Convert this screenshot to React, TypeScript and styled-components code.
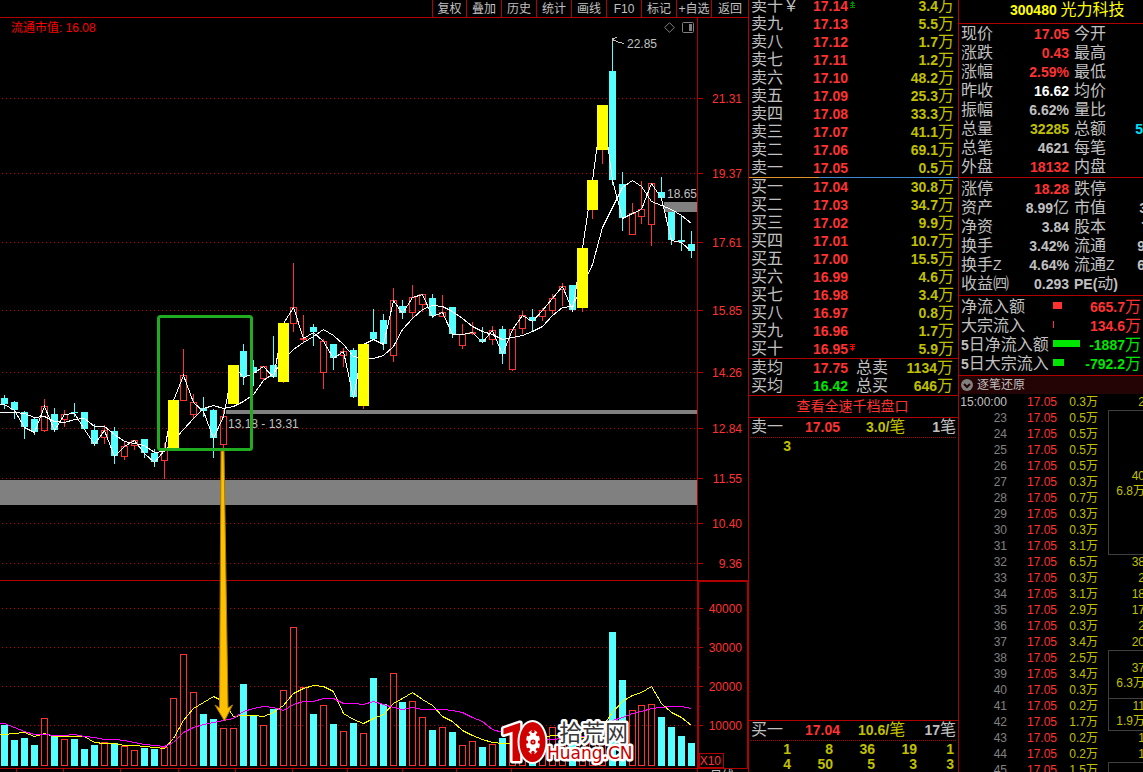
import React from "react";
import styled, { createGlobalStyle } from "styled-components";

const LINE = "#b00000";
const RED = "#ff3232";
const CYAN = "#54ffff";
const GOLD = "#c0c000";
const GRAY = "#c0c0c0";
const GREEN = "#00e600";

const GlobalStyle = createGlobalStyle`
  * { box-sizing: border-box; }
  body {
    margin: 0;
    background: #000;
    color: ${GRAY};
    font-family: "Liberation Sans", "Noto Sans CJK SC", sans-serif;
    font-size: 12px;
  }
`;

const Screen = styled.div`
  display: flex;
  height: 100vh;
  overflow: hidden;
  background: #000;
`;

/* ---------- chart column ---------- */

const ChartColumn = styled.main`
  flex: 1;
  min-width: 0;
  display: flex;
  flex-direction: column;
`;

const Toolbar = styled.nav`
  display: flex;
  justify-content: flex-end;
  flex: none;
  height: 18px;
  border-bottom: 1px solid ${LINE};
`;

const ToolButton = styled.button`
  width: 35px;
  padding: 0;
  border: 0;
  border-left: 1px solid ${LINE};
  background: none;
  color: ${GRAY};
  font: inherit;
  line-height: 14px;
  white-space: nowrap;
  &:first-child { width: 34px; }
  &:last-child { width: 37px; }
`;

const ChartBody = styled.section`
  position: relative;
  flex: 1;
  min-height: 0;
`;

const ChartHeader = styled.header`
  position: absolute;
  inset: 0 54px auto 11px;
  display: flex;
  align-items: center;
  gap: 7px;
  height: 19px;
`;

const MarketValue = styled.span`
  margin-right: auto;
  color: #ff0000;
  line-height: 14px;
`;

const IconButton = styled.button`
  display: flex;
  padding: 0;
  border: 0;
  background: none;
`;

const ChartSvg = styled.svg`
  display: block;
  width: 100%;
  font-family: "Liberation Sans", "Noto Sans CJK SC", sans-serif;
  font-size: 12px;
`;

type Kind = "c" | "r" | "y";
/* kind, body top, body bottom, high, low, volume top */
type Candle = [Kind, number, number, number, number, number];

const candles: Candle[] = [
  ["c", 398, 404, 395, 409, 725],
  ["c", 402, 410, 401, 419, 740],
  ["c", 412, 427, 411, 439, 738],
  ["c", 419, 432, 417, 435, 745],
  ["r", 406, 431, 399, 432, 718],
  ["c", 414, 430, 408, 432, 736],
  ["r", 414, 420, 410, 427, 739],
  ["c", 412, 413, 403, 417, 739],
  ["c", 412, 429, 412, 429, 749],
  ["c", 430, 444, 424, 446, 745],
  ["r", 430, 438, 425, 444, 742],
  ["c", 431, 456, 427, 464, 743],
  ["r", 446, 457, 441, 460, 746],
  ["r", 440, 446, 440, 450, 750],
  ["c", 439, 453, 439, 458, 748],
  ["c", 453, 462, 449, 467, 749],
  ["r", 450, 461, 443, 479, 747],
  ["y", 400, 448, 400, 451, 698],
  ["r", 375, 401, 349, 401, 654],
  ["r", 402, 415, 394, 419, 692],
  ["c", 408, 411, 397, 417, 714],
  ["c", 410, 438, 409, 458, 719],
  ["r", 416, 445, 410, 451, 728],
  ["y", 365, 404, 365, 404, 728],
  ["c", 351, 377, 344, 385, 684],
  ["c", 367, 373, 360, 386, 715],
  ["r", 366, 379, 366, 380, 725],
  ["c", 365, 377, 336, 378, 709],
  ["y", 323, 382, 323, 383, 690],
  ["r", 307, 324, 263, 332, 627],
  ["r", 338, 340, 315, 342, 687],
  ["c", 327, 332, 324, 346, 714],
  ["r", 341, 373, 339, 389, 705],
  ["c", 344, 358, 344, 370, 724],
  ["r", 351, 356, 348, 367, 731],
  ["c", 350, 397, 348, 398, 723],
  ["y", 344, 406, 344, 409, 733],
  ["c", 332, 339, 309, 340, 678],
  ["c", 320, 344, 314, 350, 704],
  ["r", 300, 356, 288, 362, 673],
  ["c", 306, 313, 300, 319, 702],
  ["r", 297, 313, 285, 319, 701],
  ["r", 294, 305, 294, 312, 717],
  ["c", 298, 316, 294, 318, 730],
  ["r", 312, 317, 295, 317, 727],
  ["c", 307, 334, 307, 338, 732],
  ["r", 334, 346, 324, 349, 745],
  ["r", 332, 334, 322, 335, 741],
  ["c", 339, 342, 327, 343, 747],
  ["r", 330, 340, 326, 345, 744],
  ["c", 329, 354, 326, 364, 738],
  ["r", 329, 370, 329, 371, 733],
  ["r", 315, 329, 311, 334, 735],
  ["c", 317, 321, 309, 331, 738],
  ["r", 310, 317, 308, 321, 733],
  ["r", 298, 311, 294, 314, 727],
  ["r", 286, 290, 283, 306, 737],
  ["c", 285, 310, 285, 312, 743],
  ["y", 248, 308, 248, 312, 741],
  ["y", 180, 210, 180, 219, 742],
  ["y", 105, 150, 105, 164, 732],
  ["c", 71, 180, 40, 185, 632],
  ["c", 184, 218, 172, 231, 680],
  ["r", 213, 235, 203, 235, 710],
  ["r", 209, 217, 181, 224, 705],
  ["r", 183, 225, 183, 246, 704],
  ["c", 192, 198, 177, 200, 717],
  ["c", 212, 240, 212, 245, 727],
  ["c", 240, 242, 216, 251, 736],
  ["c", 244, 251, 231, 258, 743],
];

/* the column step is a touch under ten pixels, so a pixel drops out now and then */
const xOf = (i: number) => 10 * i + (i < 17 ? 4 : i < 40 ? 3 : i < 64 ? 2 : 1);

const closes = candles.map(([k, top, bottom]) => (k === "c" ? bottom : top));
const average = [
  412, 412, 413, 417, 416, 421, 422, 419, 418, 426, 426, 434, 441, 443, 445, 452, 451, 440, 429, 418, 408, 405, 408,
  406, 401, 394, 380, 373, 359, 349, 342, 336, 329, 335, 344, 356, 358, 358, 355, 346, 329, 318, 309, 305, 306, 311,
  318, 326, 331, 334, 339, 337, 335, 331, 326, 315, 307, 306, 285, 264, 227, 207, 187, 180, 186, 201, 205, 209, 215,
  223,
];
const volumeFast = [
  734, 733, 732, 736, 733, 736, 736, 736, 736, 742, 743, 743, 745, 745, 746, 747, 748, 738, 720, 708, 702, 696, 701,
  716, 715, 715, 716, 712, 705, 693, 688, 685, 686, 691, 713, 719, 723, 718, 714, 703, 698, 692, 699, 705, 716, 721,
  730, 735, 739, 742, 743, 743, 742, 742, 737, 735, 735, 737, 737, 737, 726, 712, 701, 695, 692, 686, 703, 712, 717,
  725,
];
const volumeSlow = [
  723, 727, 731, 734, 734, 735, 735, 734, 736, 737, 739, 739, 740, 742, 744, 745, 746, 742, 732, 727, 724, 722, 720,
  718, 711, 708, 706, 707, 710, 704, 701, 701, 698, 698, 703, 703, 704, 701, 704, 707, 709, 707, 709, 709, 709, 710,
  712, 717, 721, 729, 732, 735, 738, 739, 739, 739, 738, 737, 736, 734, 727, 720, 717, 713, 711, 708, 707, 706, 706,
  708,
];

const points = (ys: number[]) =>
  `0,${ys[0]} ` + ys.map((y, i) => `${xOf(i) + 0.5},${y + 0.5}`).join(" ");

const priceGrid: [string, number][] = [
  ["21.31", 98], ["19.37", 173], ["17.61", 242], ["15.85", 310], ["14.26", 372],
  ["12.84", 428], ["11.55", 478], ["10.40", 523], ["9.36", 563],
];
const volumeGrid: [string, number][] = [
  ["40000", 608], ["30000", 647], ["20000", 686], ["10000", 725],
];

function CandleMark({ candle, x }: { candle: Candle; x: number }) {
  const [kind, top, bottom, high, low] = candle;
  if (kind === "y") {
    return <rect x={x} y={bottom} width={1} height={low - bottom} fill={RED} />;
  }
  if (kind === "c") {
    return (
      <g fill={CYAN}>
        <rect x={x} y={high} width={1} height={low - high} />
        <rect x={x - 3} y={top} width={7} height={bottom - top} />
      </g>
    );
  }
  return (
    <g>
      <rect x={x} y={high} width={1} height={top - high} fill={RED} />
      <rect x={x} y={bottom} width={1} height={Math.max(0, low - bottom)} fill={RED} />
      <rect x={x - 2.5} y={top + 0.5} width={6} height={bottom - top - 1} fill="none" stroke={RED} />
    </g>
  );
}

function Logo() {
  const spokes = [0, 45, 90, 135, 180, 225, 270, 315];
  return (
    <g>
      <g stroke="#fff" strokeLinejoin="round" fill="#d00000" paintOrder="stroke">
        <text x={499} y={761} fontSize={54} fontWeight={700} fontFamily="Roboto, sans-serif" strokeWidth={5}>1</text>
        <ellipse cx={532.5} cy={742} rx={13} ry={20} strokeWidth={4} />
      </g>
      <ellipse cx={533} cy={742} rx={7} ry={12} fill="#fff" />
      <g fill="#d00000">
        {spokes.map((a) => (
          <circle key={a} cx={533 + 6.5 * Math.cos((a * Math.PI) / 180)} cy={742 + 10.5 * Math.sin((a * Math.PI) / 180)} r={1.7} />
        ))}
        <circle cx={533} cy={742} r={2.6} />
      </g>
      <circle cx={533} cy={742} r={0.8} fill="#fff" />
      <g stroke="#fff" strokeWidth={5} strokeLinejoin="round" paintOrder="stroke">
        <text x={559} y={741} fontSize={23} fontFamily="Noto Sans CJK SC, sans-serif" fill="#383838">拾荒网</text>
        <text x={547} y={759} fontSize={17} fontFamily="DejaVu Sans, sans-serif" fill="#c80000">Huang.CN</text>
      </g>
    </g>
  );
}

function Chart() {
  return (
    <ChartSvg viewBox="0 18 748 754" role="img" aria-label="K线图">
      <g shapeRendering="crispEdges">
        <rect x={0} y={480} width={697} height={25} fill="#808080" />
        <rect x={226} y={410} width={471} height={4} fill="#808080" />
        <rect x={664} y={202} width={33} height={10} fill="#808080" />
        {[...priceGrid, ...volumeGrid].map(([label, y]) => (
          <g key={label} stroke="#c00000">
            <line x1={2} x2={697} y1={y + 0.5} y2={y + 0.5} strokeDasharray="1 3" />
            <line x1={698} x2={703} y1={y + 0.5} y2={y + 0.5} />
          </g>
        ))}
        <g fill={LINE}>
          <rect x={697} y={18} width={1} height={754} />
          <rect x={0} y={580} width={748} height={1} />
          <rect x={0} y={768} width={748} height={1} />
          <rect x={698} y={581} width={50} height={1} />
          <rect x={698} y={581} width={1} height={187} />
          <rect x={747} y={581} width={1} height={187} />
          {[628, 667, 706].map((y) => <rect key={y} x={699} y={y} width={1} height={1} />)}
          {[16, 63, 120, 178, 235, 292, 347, 402, 456, 511].map((x) => (
            <rect key={x} x={x} y={769} width={1} height={3} />
          ))}
        </g>
        <rect x={699.5} y={753.5} width={24} height={14} fill="none" stroke={LINE} />
        {candles.map((c, i) => <CandleMark key={i} candle={c} x={xOf(i)} />)}
        {candles.map((c, i) =>
          c[0] === "c" ? (
            <rect key={i} x={xOf(i) - 3} y={c[5]} width={7} height={766 - c[5]} fill={CYAN} />
          ) : (
            <rect key={i} x={xOf(i) - 2.5} y={c[5] + 0.5} width={6} height={765 - c[5]} fill="none" stroke={RED} />
          ),
        )}
        <g fill="none">
          <polyline points={points(average)} stroke="#fff" />
          <polyline points={points(closes)} stroke="#fff" />
          <polyline points={points(volumeFast)} stroke="#ffff00" />
          <polyline points={points(volumeSlow)} stroke="#ff00ff" />
        </g>
        {candles.map((c, i) =>
          c[0] === "y" ? (
            <rect key={i} x={xOf(i) - 5} y={c[1]} width={11} height={c[2] - c[1]} fill="#ffff00" />
          ) : null,
        )}
        <path d="M612.5 43V38.5L617 37.500M612.500 39.500L618 42L624 43.500" fill="none" stroke={GRAY} />
      </g>
      <g fill={GRAY}>
        <text x={627} y={48}>22.85</text>
        <text x={667} y={198}>18.65</text>
        <text x={228} y={428}>13.18 - 13.31</text>
        <text x={710} y={780}>日线</text>
      </g>
      <g fill={RED} textAnchor="end">
        {[...priceGrid, ...volumeGrid].map(([label, y]) => (
          <text key={label} x={742} y={y + 5}>{label}</text>
        ))}
        <text x={721} y={765}>X10</text>
      </g>
      <rect x={158.5} y={316.5} width={93} height={133} rx={2} fill="none" stroke="#20ac20" strokeWidth={3} />
      <path d="M221 451H224L228 708L232.500 705L224.500 721L215 705L219.500 708Z" fill="#ffc000" stroke="#a87c00" strokeWidth={1} />
      <Logo />
    </ChartSvg>
  );
}

/* ---------- shared pieces of the data panels ---------- */

const Num = styled.span`
  font-size: 14px;
  font-weight: 700;
  line-height: 0;
`;

/* Latin runs are set bold and smaller beside the Chinese characters */
function Mixed({ text }: { text: string }) {
  return (
    <>
      {text.split(/([\x20-\x7e]+)/).map((part, i) => (i % 2 ? <Num key={i}>{part}</Num> : part))}
    </>
  );
}

const DataTable = styled.table<{ $row: number }>`
  width: 100%;
  table-layout: fixed;
  border-collapse: collapse;
  font-size: 16px;
  line-height: ${(p) => p.$row}px;
  white-space: nowrap;
  td, th { padding: 0; height: ${(p) => p.$row}px; }
`;

const Label = styled.th`
  font-weight: 400;
  text-align: left;
  color: ${GRAY};
`;

const Cell = styled.td<{ $color?: string; $end?: boolean }>`
  color: ${(p) => p.$color ?? GRAY};
  text-align: ${(p) => (p.$end ? "right" : "left")};
`;

/* ---------- order book ---------- */

const BookColumn = styled.aside`
  flex: none;
  width: 210px;
  display: flex;
  flex-direction: column;
  overflow: hidden;
  border-left: 1px solid ${LINE};
`;

const BookBlock = styled.section<{ $line?: boolean; $end?: number }>`
  flex: none;
  padding: 0 ${(p) => p.$end ?? 4}px 0 2px;
  border-bottom: ${(p) => (p.$line ? `1px solid ${LINE}` : 0)};
`;

const SellBlock = styled(BookBlock)`
  margin-top: -3px;
`;

const SpreadBar = styled.div`
  flex: none;
  height: 1px;
  background: linear-gradient(90deg, #e0922f 70px, #3f87d0 70px);
`;

const Marker = styled.svg`
  margin-left: 2px;
  vertical-align: 3px;
`;

const DepthLink = styled.a`
  flex: none;
  height: 22px;
  padding: 0 12px 0 10px;
  border-bottom: 1px solid ${LINE};
  color: ${RED};
  font-size: 14px;
  line-height: 20px;
  text-align: center;
  text-decoration: none;
`;

const QueueHead = styled.div`
  flex: none;
  display: grid;
  grid-template-columns: 54px 44px 1fr auto;
  margin: 0 2px;
  height: 20px;
  border-bottom: 1px dotted ${LINE};
  font-size: 16px;
  line-height: 18px;
`;

const Average = styled.span<{ $wide?: boolean }>`
  padding-left: ${(p) => (p.$wide ? 9 : 17)}px;
  color: ${GOLD};
`;

const BookTail = styled.div`
  flex: none;
  height: 52px;
  margin-top: auto;
  border-top: 1px solid ${LINE};
`;

const Tint = styled.span<{ $color: string }>`
  color: ${(p) => p.$color};
`;

const QueueGrid = styled.div`
  display: grid;
  grid-template-columns: repeat(4, 42px) 1fr;
  padding: 1px 4px 0 0;
  color: ${GOLD};
  font-size: 14px;
  font-weight: 700;
  line-height: 15px;
  text-align: right;
`;

const sells = [
  ["卖十￥", "17.14", "3.4万"], ["卖九", "17.13", "5.5万"], ["卖八", "17.12", "1.7万"],
  ["卖七", "17.11", "1.2万"], ["卖六", "17.10", "48.2万"], ["卖五", "17.09", "25.3万"],
  ["卖四", "17.08", "33.3万"], ["卖三", "17.07", "41.1万"], ["卖二", "17.06", "69.1万"],
  ["卖一", "17.05", "0.5万"],
];
const buys = [
  ["买一", "17.04", "30.8万"], ["买二", "17.03", "34.7万"], ["买三", "17.02", "9.9万"],
  ["买四", "17.01", "10.7万"], ["买五", "17.00", "15.5万"], ["买六", "16.99", "4.6万"],
  ["买七", "16.98", "3.4万"], ["买八", "16.97", "0.8万"], ["买九", "16.96", "1.7万"],
  ["买十", "16.95", "5.9万"],
];

function BookTable({ rows }: { rows: string[][] }) {
  return (
    <DataTable $row={18}>
      <colgroup><col style={{ width: 62 }} /><col style={{ width: 60 }} /><col /></colgroup>
      <tbody>
        {rows.map(([name, price, amount]) => (
          <tr key={name}>
            <Label scope="row">{name}</Label>
            <Cell $color={RED}>
              <Mixed text={price} />
              {price === "17.14" && (
                <Marker width={5} height={7} viewBox="0 0 5 7"><path d="M2.500 0L5 3H3V4H5V5H3V6H5V7H0V6H2V5H0V4H2V3H0Z" fill="#008c00" /></Marker>
              )}
              {price === "16.95" && (
                <Marker width={5} height={7} viewBox="0 0 5 7"><path d="M0 0H5V1H3V2H5V3H3V4H5L2.500 7L0 4H2V3H0V2H2V1H0Z" fill="#ff0000" /></Marker>
              )}
            </Cell>
            <Cell $color={GOLD} $end><Mixed text={amount} /></Cell>
          </tr>
        ))}
      </tbody>
    </DataTable>
  );
}

function Book() {
  return (
    <BookColumn>
      <SellBlock><BookTable rows={sells} /></SellBlock>
      <SpreadBar />
      <BookBlock $line><BookTable rows={buys} /></BookBlock>
      <BookBlock $line $end={5}>
        <DataTable $row={18}>
          <colgroup><col style={{ width: 62 }} /><col style={{ width: 43 }} /><col style={{ width: 34 }} /><col /></colgroup>
          <tbody>
            <tr>
              <Label scope="row">卖均</Label>
              <Cell $color={RED}><Mixed text="17.75" /></Cell>
              <Label scope="row">总卖</Label>
              <Cell $color={GOLD} $end><Mixed text="1134万" /></Cell>
            </tr>
            <tr>
              <Label scope="row">买均</Label>
              <Cell $color={GREEN}><Mixed text="16.42" /></Cell>
              <Label scope="row">总买</Label>
              <Cell $color={GOLD} $end><Mixed text="646万" /></Cell>
            </tr>
          </tbody>
        </DataTable>
      </BookBlock>
      <DepthLink href="#depth">查看全速千档盘口</DepthLink>
      <QueueHead>
        <span>卖一</span>
        <Tint $color={RED}><Mixed text="17.05" /></Tint>
        <Average><Mixed text="3.0/笔" /></Average>
        <span><Mixed text="1笔" /></span>
      </QueueHead>
      <QueueGrid><span>3</span></QueueGrid>
      <BookTail>
        <QueueHead>
          <span>买一</span>
          <Tint $color={RED}><Mixed text="17.04" /></Tint>
          <Average $wide><Mixed text="10.6/笔" /></Average>
          <span><Mixed text="17笔" /></span>
        </QueueHead>
        <QueueGrid>
          <span>1</span><span>8</span><span>36</span><span>19</span><span>1</span>
          <span>4</span><span>50</span><span>5</span><span>3</span><span>3</span>
        </QueueGrid>
      </BookTail>
    </BookColumn>
  );
}

/* ---------- quote panel ---------- */

const QuoteColumn = styled.aside`
  flex: none;
  width: 185px;
  overflow: hidden;
  border-left: 1px solid ${LINE};
`;

const StockTitle = styled.h1`
  margin: 0;
  height: 24px;
  padding-left: 51px;
  border-bottom: 1px solid ${LINE};
  color: #ffff00;
  font-size: 16px;
  font-weight: 400;
  line-height: 20px;
  white-space: nowrap;
`;

const QuoteBlock = styled.section<{ $top: number; $bottom: number }>`
  padding: ${(p) => p.$top}px 0 ${(p) => p.$bottom}px 2px;
  border-bottom: 1px solid ${LINE};
`;

const Overhang = styled.span<{ $by: number }>`
  margin-right: -${(p) => p.$by}px;
`;

const Indent = styled.span`
  padding-left: 5px;
`;

const Plain = styled.span`
  font-size: 14px;
  line-height: 0;
`;

/* label, value, value colour, second label, second value, its colour, overhang */
type Quote = [string, string, string, string, string?, string?, number?];

const quotesTop: Quote[] = [
  ["现价", "17.05", RED, "今开"],
  ["涨跌", "0.43", RED, "最高"],
  ["涨幅", "2.59%", RED, "最低"],
  ["昨收", "16.62", "#fff", "均价"],
  ["振幅", "6.62%", GRAY, "量比"],
  ["总量", "32285", GOLD, "总额", "5", "#00e0ff", 0],
  ["总笔", "4621", GRAY, "每笔"],
  ["外盘", "18132", RED, "内盘"],
];
const quotesBottom: Quote[] = [
  ["涨停", "18.28", RED, "跌停"],
  ["资产", "8.99亿", GRAY, "市值", "3", GRAY, 4],
  ["净资", "3.84", GRAY, "股本", "7", GRAY, 6],
  ["换手", "3.42%", GRAY, "流通", "9", GRAY, 2],
  ["换手Z", "4.64%", GRAY, "流通Z", "6", GRAY, 2],
  ["收益㈣", "0.293", GRAY, "PE(动)"],
];

function QuoteLabel({ text }: { text: string }) {
  return text.endsWith("Z") ? <>{text.slice(0, -1)}<Plain>Z</Plain></> : <Mixed text={text} />;
}

function QuoteTable({ rows }: { rows: Quote[] }) {
  return (
    <DataTable $row={19}>
      <colgroup><col style={{ width: 50 }} /><col style={{ width: 58 }} /><col style={{ width: 54 }} /><col /></colgroup>
      <tbody>
        {rows.map(([name, value, color, name2, value2, color2, by]) => (
          <tr key={name}>
            <Label scope="row"><QuoteLabel text={name} /></Label>
            <Cell $color={color} $end><Mixed text={value} /></Cell>
            <Label scope="row"><Indent><QuoteLabel text={name2} /></Indent></Label>
            <Cell $color={color2} $end>
              {value2 && <Overhang $by={by ?? 0}><Mixed text={value2} /></Overhang>}
            </Cell>
          </tr>
        ))}
      </tbody>
    </DataTable>
  );
}

const FlowRow = styled.div`
  display: grid;
  grid-template-columns: 92px 1fr auto;
  align-items: center;
  height: 19px;
  padding-right: 2px;
  font-size: 16px;
  line-height: 19px;
  white-space: nowrap;
`;

const FlowBar = styled.i<{ $color: string }>`
  height: 7px;
  margin-bottom: 2px;
  background: ${(p) => p.$color};
`;

const flows = [
  { name: "净流入额", size: 9, value: "665.7万", color: RED },
  { name: "大宗流入", size: 1, value: "134.6万", color: RED },
  { name: "5日净流入额", size: 27, value: "-1887万", color: GREEN },
  { name: "5日大宗流入", size: 11, value: "-792.2万", color: GREEN },
];

const TickHeader = styled.button`
  display: flex;
  align-items: center;
  gap: 4px;
  width: 100%;
  height: 18px;
  padding: 0 2px;
  border: 0;
  background: #240404;
  color: ${GRAY};
  font: inherit;
  line-height: 16px;
`;

const TickTable = styled.table`
  table-layout: fixed;
  width: 186px;
  border-spacing: 0;
  color: ${GOLD};
  font-size: 12px;
  line-height: 16px;
  text-align: right;
  white-space: nowrap;
  td { padding: 0; height: 16px; }
`;

const TimeCell = styled.td<{ $full: boolean }>`
  color: ${(p) => (p.$full ? GRAY : "#808080")};
`;

const PriceCell = styled.td`
  color: ${RED};
`;

const GroupCell = styled.td<{ $boxed: boolean }>`
  line-height: ${(p) => (p.$boxed ? 15 : 16)}px;
  box-shadow: ${(p) => (p.$boxed ? "inset 1px 1px #404040, 0 1px #404040" : "none")};
`;

const GroupText = styled.div<{ $count: number }>`
  padding-top: ${(p) => (p.$count > 1 ? 4 : 0)}px;
  & + & { padding-top: 0; }
`;

/* time, amount, group lines, rows that the group spans */
type Tick = [string, string, string[]?, number?];
const ticks: Tick[] = [
  ["15:00:00", "0.3万", ["2"]],
  ["23", "0.5万", ["40", "6.8万"], 9],
  ["24", "0.5万"], ["25", "0.5万"], ["26", "0.5万"], ["27", "0.3万"],
  ["28", "0.7万"], ["29", "0.3万"], ["30", "0.3万"], ["31", "3.1万"],
  ["32", "6.5万", ["38"]],
  ["33", "0.3万", ["2"]],
  ["34", "3.1万", ["18"]],
  ["35", "2.9万", ["17"]],
  ["36", "0.3万", ["2"]],
  ["37", "3.4万", ["20"]],
  ["38", "2.5万", ["37", "6.3万"], 3],
  ["39", "3.4万"], ["40", "0.3万"],
  ["41", "0.2万", ["11", "1.9万"], 2],
  ["42", "1.7万"],
  ["43", "0.2万", ["1"]],
  ["44", "0.2万", ["1"]],
  ["45", "1.5万", [""], 1],
];

function QuotePanel() {
  return (
    <QuoteColumn>
      <StockTitle><Mixed text="300480 " />光力科技</StockTitle>
      <QuoteBlock $top={0} $bottom={1}><QuoteTable rows={quotesTop} /></QuoteBlock>
      <QuoteBlock $top={1} $bottom={2}><QuoteTable rows={quotesBottom} /></QuoteBlock>
      <QuoteBlock $top={1} $bottom={2}>
        {flows.map((f) => (
          <FlowRow key={f.name}>
            <span><Mixed text={f.name} /></span>
            <FlowBar $color={f.color} style={{ width: f.size }} />
            <Tint $color={f.color}><Mixed text={f.value} /></Tint>
          </FlowRow>
        ))}
      </QuoteBlock>
      <TickHeader>
        <svg width={12} height={12} viewBox="0 0 12 12">
          <circle cx={6} cy={6} r={6} fill="#808080" />
          <path d="M3 5L6 8L9 5" fill="none" stroke="#240404" strokeWidth={2} />
        </svg>
        逐笔还原
      </TickHeader>
      <TickTable>
        <colgroup>
          <col style={{ width: 48 }} /><col style={{ width: 50 }} /><col style={{ width: 41 }} />
          <col style={{ width: 10 }} /><col />
        </colgroup>
        <tbody>
          {ticks.map(([time, amount, group, span]) => (
            <tr key={time}>
              <TimeCell $full={time.length > 2}>{time}</TimeCell>
              <PriceCell>17.05</PriceCell>
              <td>{amount}</td>
              <td />
              {group && (
                <GroupCell $boxed={!!span} rowSpan={span ?? 1}>
                  {group.map((line, i) => (
                    <GroupText key={i} $count={span && span > 2 ? group.length : 1}>{line}</GroupText>
                  ))}
                </GroupCell>
              )}
            </tr>
          ))}
        </tbody>
      </TickTable>
    </QuoteColumn>
  );
}

const tools = ["复权", "叠加", "历史", "统计", "画线", "F10", "标记", "+自选", "返回"];

export default function App() {
  return (
    <Screen>
      <GlobalStyle />
      <ChartColumn>
        <Toolbar>
          {tools.map((t) => <ToolButton key={t}>{t}</ToolButton>)}
        </Toolbar>
        <ChartBody>
          <Chart />
          <ChartHeader>
            <MarketValue>流通市值: 16.08</MarketValue>
            <IconButton aria-label="标记">
              <svg width={11} height={11} viewBox="0 0 11 11">
                <path d="M5.500 0.700L10.300 5.500L5.500 10.300L0.700 5.500Z" fill="none" stroke="#808080" />
              </svg>
            </IconButton>
            <IconButton aria-label="侧栏">
              <svg width={12} height={11} viewBox="0 0 12 11">
                <rect x={0.5} y={0.5} width={11} height={10} rx={1} fill="none" stroke="#808080" />
                <rect x={7} y={2} width={3} height={7} fill="#808080" />
              </svg>
            </IconButton>
          </ChartHeader>
        </ChartBody>
      </ChartColumn>
      <Book />
      <QuotePanel />
    </Screen>
  );
}
